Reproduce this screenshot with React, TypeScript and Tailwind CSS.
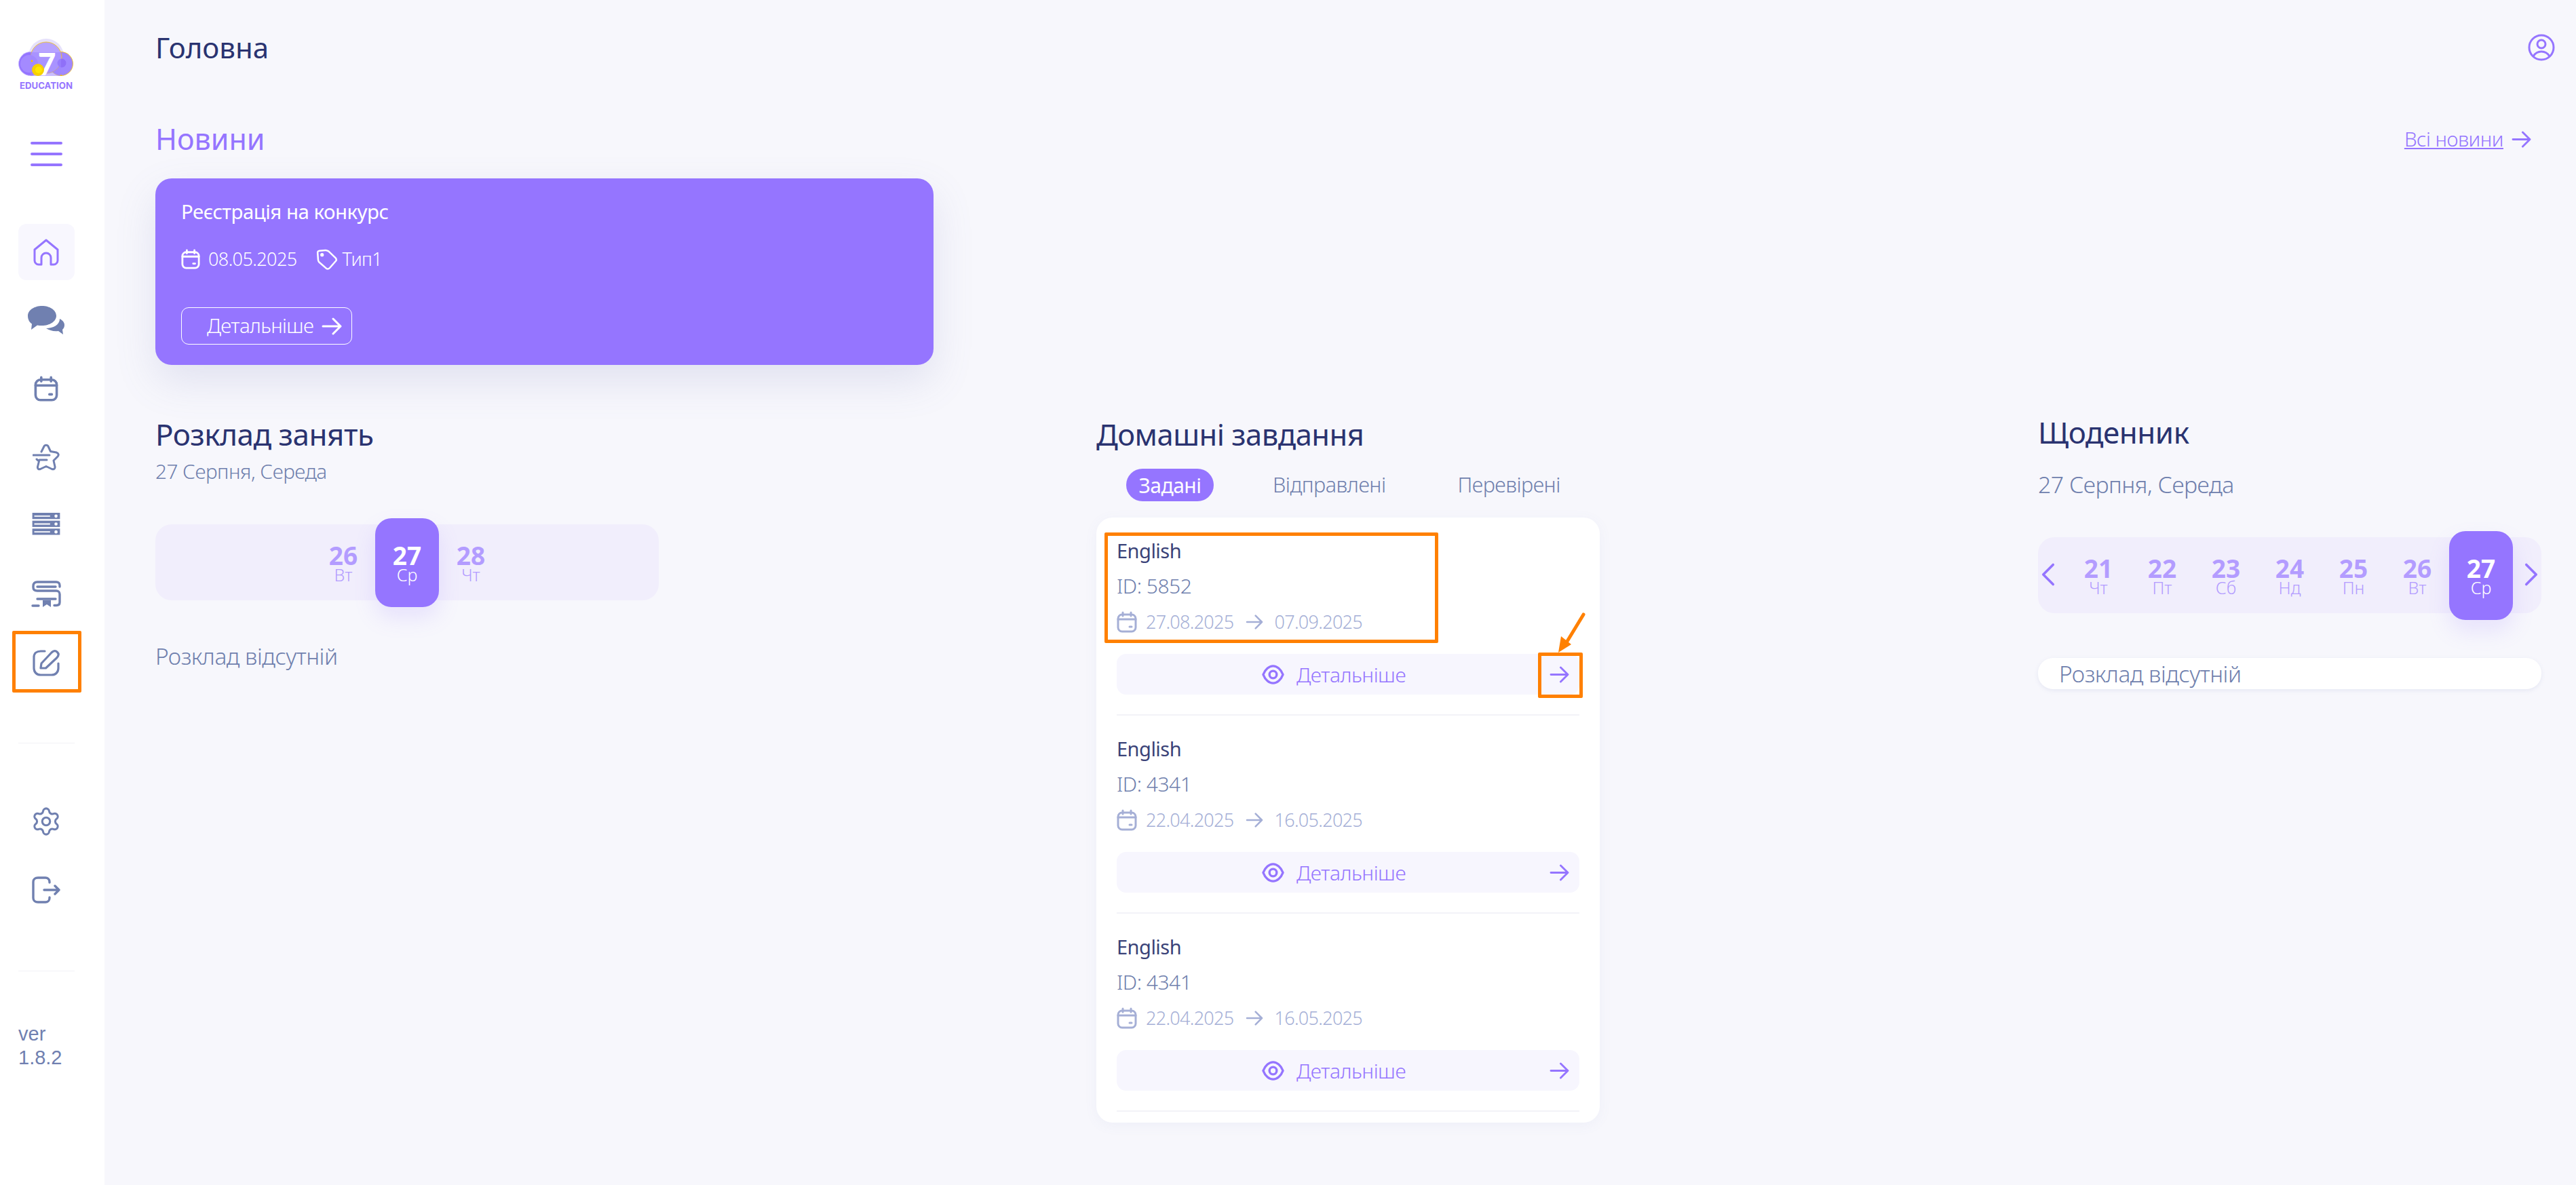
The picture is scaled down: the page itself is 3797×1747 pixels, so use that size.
import type { ReactNode } from "react";
import { ChevronLeft, ChevronRight, Settings } from "lucide-react";

const font = { fontFamily: '"Noto Sans", "Open Sans", sans-serif' };

function Arrow({ className }: { className: string }) {
  return (
    <svg viewBox="0 0 30 26" fill="none" stroke="currentColor" strokeWidth="3" strokeLinecap="round" strokeLinejoin="round" className={className}>
      <path d="M2 13H28M17 2L28 13L17 24" />
    </svg>
  );
}

function CalendarIcon({ className }: { className: string }) {
  return (
    <svg viewBox="0 0 30 32" fill="none" stroke="currentColor" strokeWidth="3" strokeLinecap="round" className={className}>
      <rect x="2" y="5" width="26" height="25" rx="6" />
      <path d="M2 12H28M9 2V7M21 2V7M19 23H22" />
    </svg>
  );
}

function EyeIcon({ className }: { className: string }) {
  return (
    <svg viewBox="0 0 34 34" fill="none" stroke="currentColor" strokeWidth="3.5" className={className}>
      <path d="M2 17C5 9 11 4 17 4C23 4 29 9 32 17C29 25 23 30 17 30C11 30 5 25 2 17Z" strokeLinejoin="round" />
      <circle cx="17" cy="17" r="5.5" />
    </svg>
  );
}

function Logo() {
  return (
    <div className="h-[74px] flex flex-col items-center">
      <svg viewBox="0 0 80 57" className="w-[80px] h-[57px] shrink-0 overflow-visible">
        <circle cx="40" cy="26" r="26" fill="#e6e1fb" />
        <circle cx="17" cy="37" r="17.5" fill="#9575ff" stroke="#c7b8ff" strokeWidth="0.8" />
        <circle cx="62" cy="37" r="17.5" fill="#a088ff" stroke="#f5c400" strokeWidth="0.8" />
        <circle cx="40" cy="28" r="23" fill="#b7a3ff" stroke="#f5c400" strokeWidth="0.8" />
        <circle cx="15" cy="37" r="13" fill="#a48aff" />
        <circle cx="63" cy="36" r="6.5" fill="#8f70f8" />
        <path d="M17 20H62V55H17Z" fill="#9f86ff" opacity="0.55" />
        <text x="41" y="54" textAnchor="middle" fontSize="46" fontWeight="900" fill="#fff" fontFamily="Lato, sans-serif">7</text>
        <circle cx="28" cy="46" r="9" fill="#f7d000" />
        <circle cx="29" cy="46" r="5" fill="#ffe600" />
        <circle cx="19" cy="33" r="1.4" fill="#f5c400" />
        <circle cx="62" cy="54" r="1" fill="#f5c400" />
      </svg>
      <span className="text-[13.2px] leading-[13px] font-bold text-[#9575ff] mt-[6px]" style={{ fontFamily: "Inter, sans-serif" }}>EDUCATION</span>
    </div>
  );
}

function IconSlot({ children }: { children: ReactNode }) {
  return <div className="h-[101px] flex items-center justify-center">{children}</div>;
}

function Sidebar() {
  return (
    <aside className="w-[154px] shrink-0 bg-white min-h-[1747px] pt-[57px]">
      <div className="w-[136px] flex flex-col items-center">
        <Logo />
        <div className="mt-[78px] w-[47px] flex flex-col gap-[12px]">
          <div className="h-[4px] rounded-full bg-[#9575ff]" />
          <div className="h-[4px] rounded-full bg-[#9575ff]" />
          <div className="h-[4px] rounded-full bg-[#9575ff]" />
        </div>
        <div className="mt-[85px] w-[83px] h-[83px] rounded-[12px] bg-[#f8f7fe] flex items-center justify-center">
          <svg viewBox="0 0 38 40" fill="none" stroke="#9575ff" strokeWidth="3" strokeLinejoin="round" className="w-[38px] h-[40px]">
            <path d="M2 16L19 2L36 16V32A6 6 0 0 1 30 38H26V28A7 7 0 0 0 12 28V38H8A6 6 0 0 1 2 32Z" />
          </svg>
        </div>
        <div className="mt-[8px]" />
        <IconSlot>
          <svg viewBox="0 0 54 42" className="w-[54px] h-[42px]" fill="#7080b0">
            <path d="M21 0C32 0 42 6 42 14.5C42 23 32 29 21 29C18 29 16 29 14 28.5L5 35L6 26.5C2 24 0 19.5 0 14.5C0 6 10 0 21 0Z" />
            <path d="M47 19C51 21 54 24 54 28C54 31 53 33 51 35L52 42L45 37C38 38 32 36 27 33C37 33 47 28 47 19Z" />
          </svg>
        </IconSlot>
        <IconSlot><CalendarIcon className="w-[36px] h-[40px] text-[#7080b0]" /></IconSlot>
        <IconSlot>
          <svg viewBox="0 0 40 40" fill="none" stroke="#7080b0" strokeWidth="3" strokeLinecap="round" strokeLinejoin="round" className="w-[40px] h-[40px]">
            <path d="M13 12L17 4C18 1.5 22 1.5 23 4L26.5 11.5L35 13C38.5 14 39 17 37 19L31 25L33 34C33.5 37 31 38.5 28.5 37.5L20 33.5L11.5 37.5C9 38.5 7 37 7.5 34L9.5 26L6 23" />
            <path d="M1 17H25M10 24H21" />
          </svg>
        </IconSlot>
        <IconSlot>
          <svg viewBox="0 0 42 34" className="w-[42px] h-[33px] -mt-[4px]">
            <rect width="42" height="9.5" fill="#7080b0" />
            <rect y="12" width="42" height="9.5" fill="#7080b0" />
            <rect y="24" width="42" height="9.5" fill="#7080b0" />
            <path d="M3 5H27M3 17H27M3 29H27" stroke="#fff" strokeWidth="2" />
            <circle cx="36" cy="5" r="2.4" fill="#fff" />
            <circle cx="36" cy="17" r="2.4" fill="#fff" />
            <circle cx="36" cy="29" r="2.4" fill="#fff" />
          </svg>
        </IconSlot>
        <IconSlot>
          <svg viewBox="0 0 44 40" fill="none" stroke="#7080b0" strokeWidth="3.4" strokeLinecap="round" strokeLinejoin="round" className="w-[44px] h-[40px]">
            <path d="M42 9V7C42 3.5 40 2 37 2H9C5 2 3 4 3 8V10C3 13.5 5 15 9 15H37C40 15 42 17 42 20V32C42 35 40 36.5 37 36.5H34" />
            <path d="M9 9H36M9 27H36M2 37H11" />
            <path d="M17 29H29V39L23 35L17 39Z" fill="#7080b0" stroke="none" />
          </svg>
        </IconSlot>
        <IconSlot>
          <svg viewBox="0 0 40 40" fill="none" stroke="#7080b0" strokeWidth="3.2" strokeLinecap="round" strokeLinejoin="round" className="w-[40px] h-[40px]">
            <path d="M18 3H12C6 3 2 6 2 12V28C2 34 6 38 12 38H28C34 38 38 34 38 28V21" />
            <path d="M12 28L13 21L28 5C31 2 34 2 36.5 4.5C39 7 38.5 10 35.5 13L19.5 28Z" />
          </svg>
        </IconSlot>
        <div className="w-[83px] h-px bg-[#f1f1f6] mt-[68px]" />
        <Settings className="mt-[92px] w-[46px] h-[46px] text-[#7080b0]" strokeWidth={1.6} />
        <svg viewBox="0 0 42 40" fill="none" stroke="#7080b0" strokeWidth="3.4" strokeLinecap="round" strokeLinejoin="round" className="mt-[58px] w-[42px] h-[40px]">
          <path d="M26 9V8C26 4 23 2 20 2H9C5 2 2 4 2 8V32C2 36 5 38 9 38H20C23 38 26 36 26 32V31" />
          <path d="M18 20H40M34 14L40 20L34 26" />
        </svg>
        <div className="w-[83px] h-px bg-[#f1f1f6] mt-[99px]" />
        <div className="self-start ml-[27px] mt-[75px] text-[29px] leading-[35px] text-[#7080b0]" style={{ fontFamily: '"Liberation Sans", sans-serif' }}>
          <div>ver</div>
          <div>1.8.2</div>
        </div>
      </div>
    </aside>
  );
}

function DateStrip({ days, withNav }: { days: { n: string; d: string; on?: boolean }[]; withNav?: boolean }) {
  return (
    <div className="w-[742px] h-[112px] rounded-[24px] bg-[#f1eefc] flex items-center justify-center relative">
      {withNav && <ChevronLeft className="absolute left-[-14px] top-[26px] w-[58px] h-[58px] text-[#9575ff]" strokeWidth={1.5} />}
      <div className="flex">
        {days.map((x) => (
          <div
            key={x.n}
            className={
              x.on
                ? "w-[94px] h-[131px] rounded-[24px] bg-[#9575ff] text-white flex flex-col items-center pt-[40px] shadow-[0_16px_32px_rgba(149,117,255,0.16)]"
                : "w-[94px] h-[131px] text-[#b39cff] flex flex-col items-center pt-[40px]"
            }
          >
            <div className="h-[30px] text-[37px] leading-[30px] font-bold">{x.n}</div>
            <div className="h-[26px] text-[25px] leading-[26px] font-light">{x.d}</div>
          </div>
        ))}
      </div>
      {withNav && <ChevronRight className="absolute right-[-14px] top-[26px] w-[58px] h-[58px] text-[#9575ff]" strokeWidth={1.5} />}
    </div>
  );
}

function Homework({ id, from, to }: { id: string; from: string; to: string }) {
  return (
    <div className="h-[292px] border-b-2 border-[#f3f3f8] pt-[31px]">
      <div className="text-[29px] leading-[36px] text-[#3a4278] tracking-[-0.5px]">English</div>
      <div className="mt-[15px] text-[30px] leading-[38px] font-light text-[#6f7fad] tracking-[-0.5px]">ID: {id}</div>
      <div className="mt-[18px] flex items-center text-[27px] leading-[32px] font-light text-[#a5afd6] tracking-[-0.7px]">
        <CalendarIcon className="w-[30px] h-[32px] mr-[13px]" />
        <span>{from}</span>
        <Arrow className="w-[26px] h-[22px] mx-[17px]" />
        <span>{to}</span>
      </div>
      <div className="mt-[31px] h-[60px] rounded-[14px] bg-[#f7f6fe] flex items-center justify-center pr-[42px] relative text-[#9575ff]">
        <EyeIcon className="w-[33px] h-[33px] mr-[18px]" />
        <span className="text-[30px] font-light tracking-[-0.5px]">Детальніше</span>
        <Arrow className="absolute right-[15px] top-[18px] w-[29px] h-[25px]" />
      </div>
    </div>
  );
}

export default function App() {
  return (
    <div className="flex min-h-[1747px] bg-[#f7f7fc] relative overflow-hidden" style={font}>
      <Sidebar />
      <main className="flex-1 pl-[75px] pr-[31px]">
        <div className="h-[139px] flex items-center justify-between">
          <h1 className="text-[42px] text-[#2a3370]">Головна</h1>
          <svg viewBox="0 0 40 40" fill="none" stroke="#9575ff" strokeWidth="3" className="w-[40px] h-[40px]">
            <circle cx="20" cy="20" r="18" />
            <circle cx="20" cy="15" r="6" />
            <path d="M8 33C11 28 15 26 20 26C25 26 29 28 32 33" />
          </svg>
        </div>
        <div className="mt-[33px] flex items-center justify-between h-[66px]">
          <h2 className="text-[43px] text-[#9575ff]">Новини</h2>
          <div className="flex items-center text-[#9575ff] mr-[35px]">
            <span className="text-[29.5px] font-light underline tracking-[-0.5px]">Всі новини</span>
            <Arrow className="w-[29px] h-[25px] ml-[12px]" />
          </div>
        </div>
        <div className="mt-[25px] w-[1147px] h-[275px] rounded-[24px] bg-[#9575ff] text-white pl-[38px] pt-[30px] shadow-[0_24px_60px_rgba(110,120,180,0.16)]">
          <div className="text-[29.4px] leading-[38px] tracking-[-0.5px]">Реєстрація на конкурс</div>
          <div className="mt-[33px] flex items-center text-[27px] leading-[36px] font-light tracking-[-0.6px]">
            <CalendarIcon className="w-[28px] h-[30px] mr-[12px]" />
            <span>08.05.2025</span>
            <svg viewBox="0 0 32 32" fill="none" stroke="currentColor" strokeWidth="2.6" strokeLinejoin="round" className="w-[31px] h-[31px] ml-[28px] mr-[8px]">
              <path d="M3 5C3 3 4 2 6 2L15 2C17 2 18 3 20 4L30 15C31 17 31 18 30 19L20 29C18 31 17 31 15 30L4 19C3 18 3 17 3 15Z" transform="rotate(-4 16 16)" />
              <circle cx="9" cy="9" r="1.4" fill="currentColor" />
            </svg>
            <span>Тип1</span>
          </div>
          <div className="mt-[53px] w-[252px] h-[55px] rounded-[11px] border-[1.5px] border-white flex items-center pl-[37px]">
            <span className="text-[29.5px] font-light tracking-[-0.6px] whitespace-nowrap">Детальніше</span>
            <Arrow className="w-[30px] h-[28px] ml-[12px] shrink-0" />
          </div>
        </div>

        <div className="grid grid-cols-[1387px_1388px_742px] mt-[70px]">
          <section>
            <h2 className="text-[44px] leading-[64px] text-[#2a3370] tracking-[-0.5px]">Розклад занять</h2>
            <p className="text-[29.7px] leading-[40px] mt-[3px] font-light text-[#6f7fad] tracking-[-0.5px]">27 Серпня, Середа</p>
            <div className="mt-[58px]">
              <DateStrip days={[{ n: "26", d: "Вт" }, { n: "27", d: "Ср", on: true }, { n: "28", d: "Чт" }]} />
            </div>
            <p className="mt-[60px] text-[33.5px] leading-[44px] font-light text-[#6f7fad] tracking-[-0.5px]">Розклад відсутній</p>
          </section>

          <section>
            <h2 className="text-[43.5px] leading-[64px] text-[#2a3370] tracking-[-0.5px]">Домашні завдання</h2>
            <div className="mt-[19px] flex items-center h-[48px]">
              <span className="ml-[44px] w-[129px] h-[48px] rounded-full bg-[#9575ff] text-white flex items-center justify-center text-[30px] tracking-[-0.5px]">Задані</span>
              <span className="ml-[87px] text-[30.5px] font-light text-[#6f7fad] tracking-[-0.5px]">Відправлені</span>
              <span className="ml-[106px] text-[30.5px] font-light text-[#6f7fad] tracking-[-0.5px]">Перевірені</span>
            </div>
            <div className="mt-[24px] w-[742px] h-[892px] rounded-[24px] bg-white px-[30px] shadow-[0_4px_20px_rgba(110,120,180,0.06)]">
              <Homework id="5852" from="27.08.2025" to="07.09.2025" />
              <Homework id="4341" from="22.04.2025" to="16.05.2025" />
              <Homework id="4341" from="22.04.2025" to="16.05.2025" />
            </div>
          </section>

          <section>
            <h2 className="-mt-[3px] text-[44px] leading-[64px] text-[#2a3370] tracking-[-0.5px]">Щоденник</h2>
            <p className="text-[33.8px] leading-[44px] mt-[23px] font-light text-[#6f7fad] tracking-[-0.5px]">27 Серпня, Середа</p>
            <div className="mt-[56px]">
              <DateStrip
                withNav
                days={[
                  { n: "21", d: "Чт" },
                  { n: "22", d: "Пт" },
                  { n: "23", d: "Сб" },
                  { n: "24", d: "Нд" },
                  { n: "25", d: "Пн" },
                  { n: "26", d: "Вт" },
                  { n: "27", d: "Ср", on: true },
                ]}
              />
            </div>
            <div className="mt-[66px] h-[46px] rounded-[22px] bg-white pl-[31px] flex items-center text-[33.5px] font-light text-[#6f7fad] tracking-[-0.5px] shadow-[0_2px_6px_rgba(110,120,180,0.12)]">
              Розклад відсутній
            </div>
          </section>
        </div>
      </main>

      <div className="absolute left-[18px] top-[930px] w-[102px] h-[91px] border-[5px] border-[#ff8000] rounded-[2px]" />
      <div className="absolute left-[1628px] top-[785px] w-[492px] h-[163px] border-[5px] border-[#ff8000] rounded-[2px]" />
      <div className="absolute left-[2267px] top-[962px] w-[66px] h-[67px] border-[5px] border-[#ff8000] rounded-[2px]" />
      <svg viewBox="0 0 50 70" className="absolute left-[2290px] top-[900px] w-[50px] h-[70px]" fill="none">
        <path d="M44 6L16 52" stroke="#ff8000" strokeWidth="5" strokeLinecap="round" />
        <path d="M7 62L11 38L26 50Z" fill="#ff8000" />
      </svg>
    </div>
  );
}
